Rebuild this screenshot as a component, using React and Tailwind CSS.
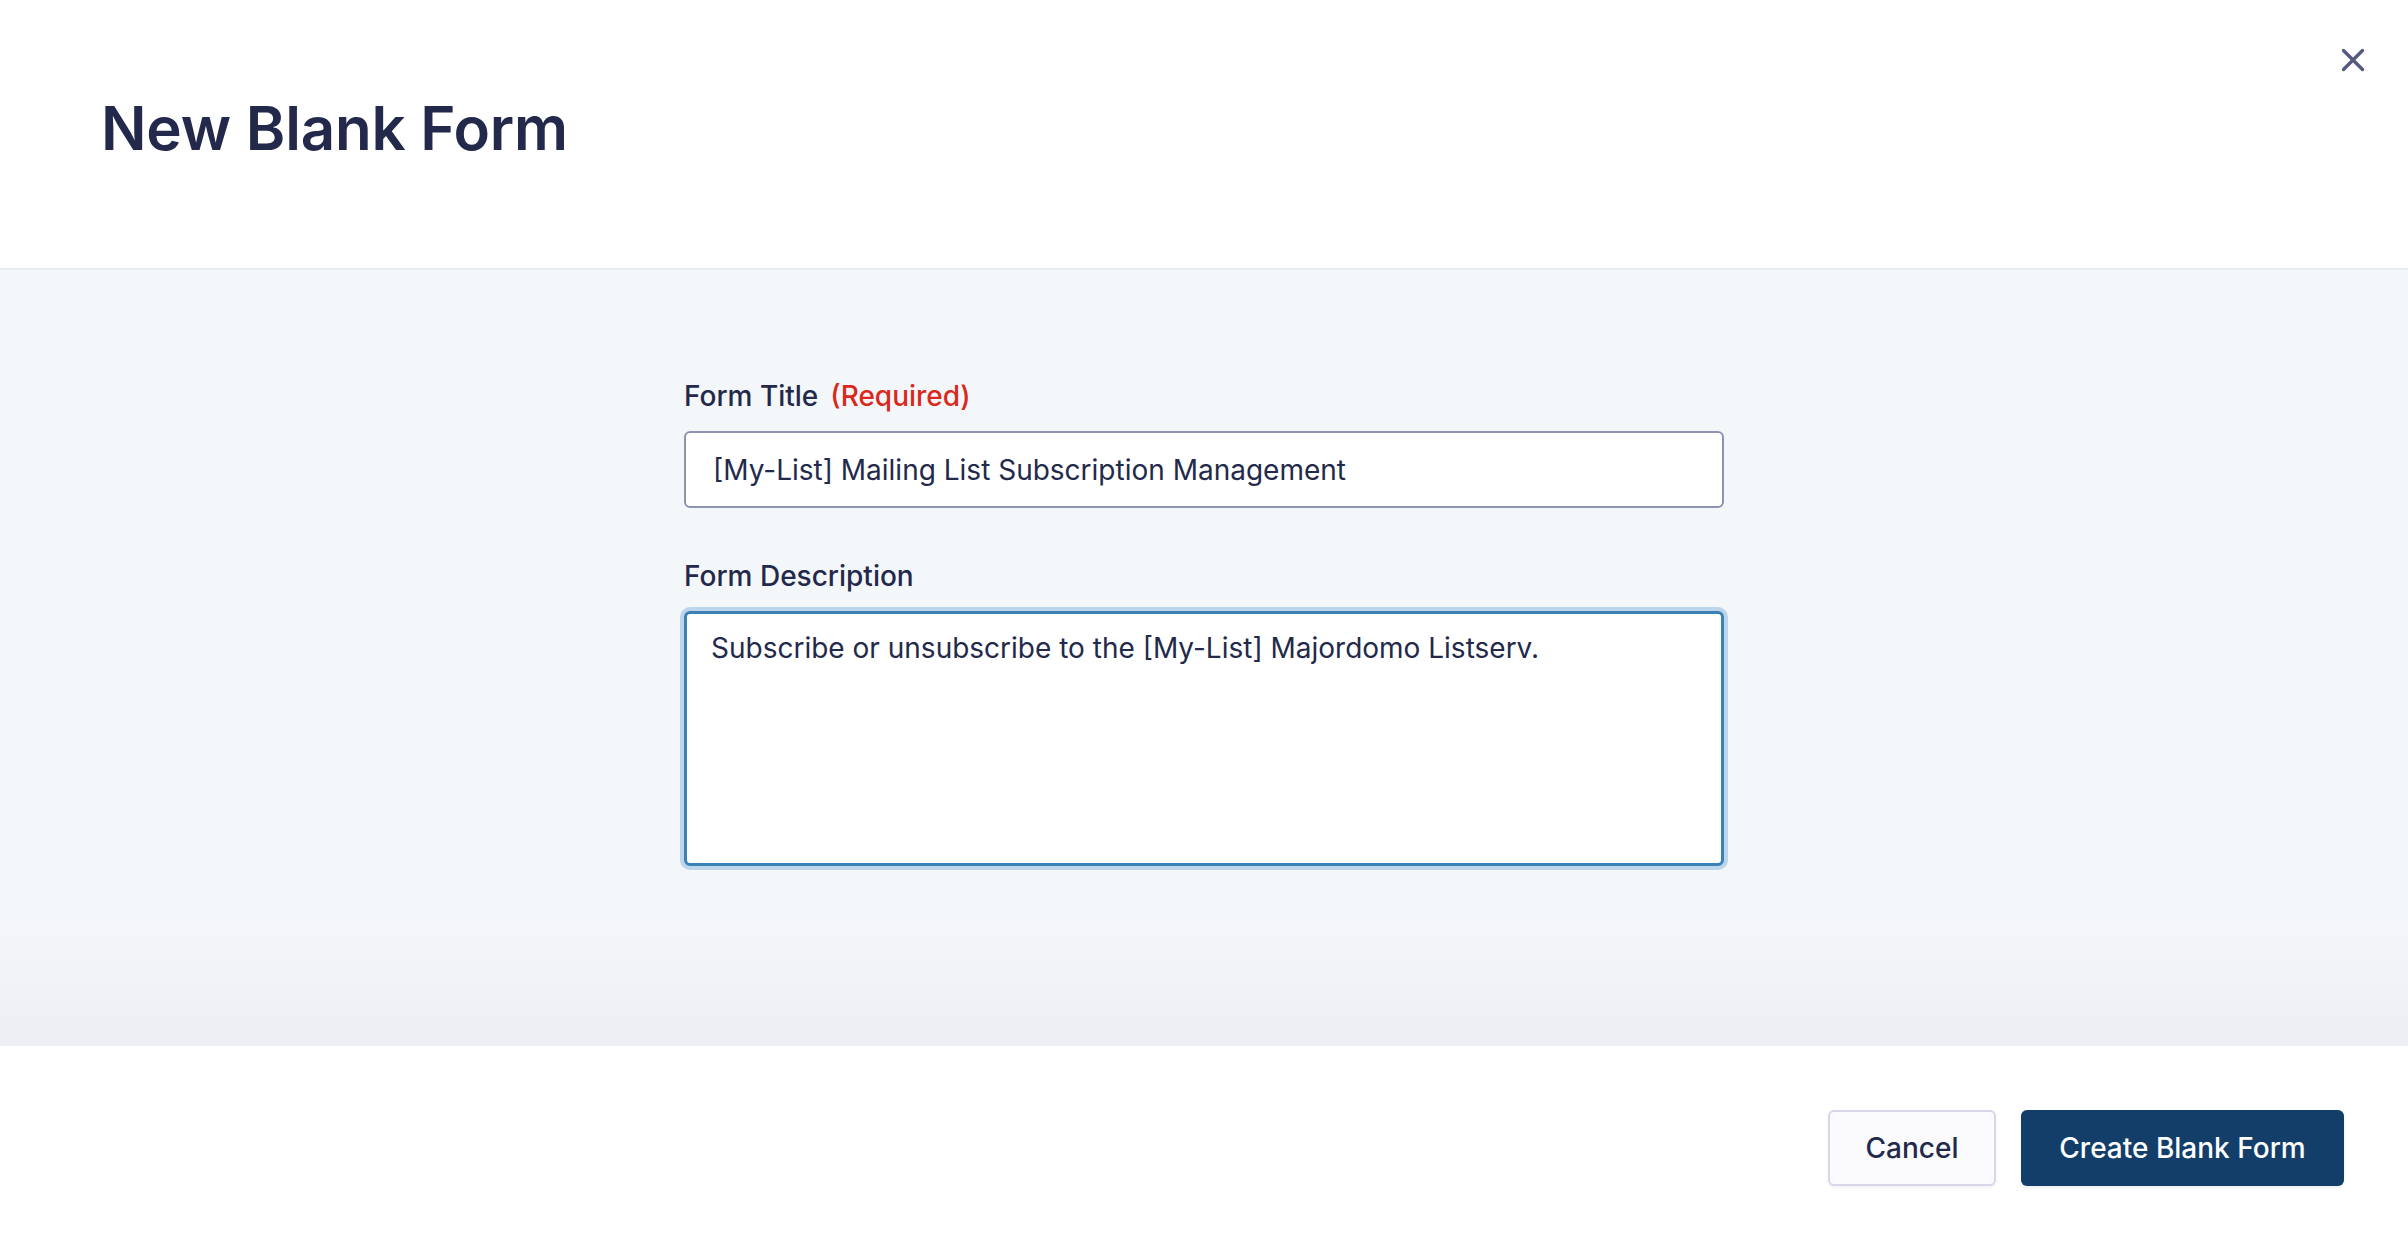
import React from "react";

export default function App() {
  return (
    <div className="flex h-[1238px] w-full flex-col bg-white font-['Inter','Noto_Sans',sans-serif] text-[#23294a]">
      <header className="flex h-[270px] shrink-0 items-start border-b-2 border-[#e9eaf3] bg-white pl-[101px] pr-[34px]">
        <h1 className="mt-[90px] flex-1 text-[60px] font-semibold leading-[76px] tracking-[-0.2px] text-[#23294a]">
          New Blank Form
        </h1>
        <button className="mt-[39px] flex h-[42px] w-[42px] items-center justify-center text-[#555b7d]">
          <svg width="24" height="24" viewBox="0 0 24 24" fill="none" stroke="currentColor" strokeWidth="3.4" strokeLinecap="round">
            <path d="M2.5 2.5 L21.5 21.5 M21.5 2.5 L2.5 21.5" />
          </svg>
        </button>
      </header>

      <main className="flex flex-1 justify-center bg-[linear-gradient(to_bottom,#f4f7fa_0%,#f4f7fa_82%,#eceef4_100%)] pt-[105px]">
        <div className="flex w-[1040px] flex-col">
          <label className="flex items-center gap-[12px] text-[28px] font-medium leading-[42px]">
            <span>Form Title</span>
            <span className="text-[#d8291c]">(Required)</span>
          </label>
          <div className="mt-[14px] flex h-[77px] items-center rounded-[6px] border-2 border-[#8f93b1] bg-white px-[27px] text-[28px] leading-[42px]">
            [My-List] Mailing List Subscription Management
          </div>

          <label className="mt-[47px] text-[28px] font-medium leading-[42px]">Form Description</label>
          <div className="mt-[14px] h-[255px] rounded-[6px] border-[3px] border-[#3c81b6] bg-white px-[24px] pt-[13px] text-[28px] leading-[42px] shadow-[0_0_0_4px_#bcd5ea]">
            Subscribe or unsubscribe to the [My-List] Majordomo Listserv.
          </div>
        </div>
      </main>

      <footer className="flex h-[192px] shrink-0 items-start justify-end gap-[25px] bg-white pr-[64px] pt-[64px]">
        <button className="flex h-[76px] w-[168px] items-center justify-center rounded-[6px] border-2 border-[#d6d7ea] bg-[#fbfbfe] text-[28px] font-medium text-[#23294a] shadow-[0_2px_3px_rgba(30,40,80,0.06)]">
          Cancel
        </button>
        <button className="flex h-[76px] w-[323px] items-center justify-center rounded-[6px] bg-[#133e6a] text-[28px] font-medium text-white shadow-[0_2px_3px_rgba(30,40,80,0.08)]">
          Create Blank Form
        </button>
      </footer>
    </div>
  );
}
